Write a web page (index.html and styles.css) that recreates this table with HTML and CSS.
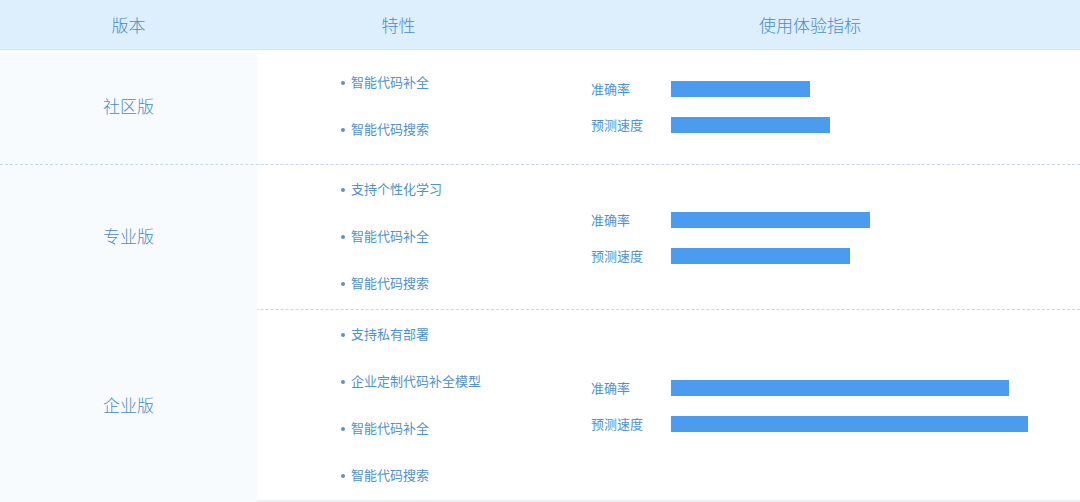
FILE: index.html
```html
<!DOCTYPE html>
<html lang="zh-CN">
<head>
  <meta charset="UTF-8">
  <meta name="viewport" content="width=device-width, initial-scale=1.0">
  <title>版本对比</title>
  <link rel="stylesheet" href="styles.css">
</head>
<body>
  <div class="table">
    <div class="head">
      <div class="cell edition">版本</div>
      <div class="cell">特性</div>
      <div class="cell">使用体验指标</div>
    </div>

    <div class="row row-small">
      <div class="cell edition">社区版</div>
      <ul class="features">
        <li>智能代码补全</li>
        <li>智能代码搜索</li>
      </ul>
      <div class="metrics">
        <div class="metric"><span class="metric-label">准确率</span><span class="bar" style="width: 139px"></span></div>
        <div class="metric"><span class="metric-label">预测速度</span><span class="bar" style="width: 159px"></span></div>
      </div>
    </div>

    <div class="row row-medium">
      <div class="cell edition">专业版</div>
      <ul class="features">
        <li>支持个性化学习</li>
        <li>智能代码补全</li>
        <li>智能代码搜索</li>
      </ul>
      <div class="metrics">
        <div class="metric"><span class="metric-label">准确率</span><span class="bar" style="width: 199px"></span></div>
        <div class="metric"><span class="metric-label">预测速度</span><span class="bar" style="width: 179px"></span></div>
      </div>
    </div>

    <div class="row row-large">
      <div class="cell edition">企业版</div>
      <ul class="features">
        <li>支持私有部署</li>
        <li>企业定制代码补全模型</li>
        <li>智能代码补全</li>
        <li>智能代码搜索</li>
      </ul>
      <div class="metrics">
        <div class="metric"><span class="metric-label">准确率</span><span class="bar" style="width: 338px"></span></div>
        <div class="metric"><span class="metric-label">预测速度</span><span class="bar" style="width: 357px"></span></div>
      </div>
    </div>
  </div>
</body>
</html>
```

FILE: styles.css
```css
/* General Styles */
body {
  margin: 0;
  padding: 0;
  background: #fff;
  font-family: "Noto Sans CJK SC", "Noto Sans", sans-serif;
  color: #4a8cc6;
}

.table {
  width: 1080px;
  height: 502px;
  border-bottom: 2px solid #edf0f4;
  box-sizing: border-box;
}

/* Header */
.head {
  display: grid;
  grid-template-columns: 257px 283px 1fr;
  height: 50px;
  background: #ddeefc;
  border-bottom: 1px solid #d3e6f7;
  box-sizing: border-box;
}

.head .cell {
  display: flex;
  align-items: center;
  justify-content: center;
  padding-bottom: 1px;
  font-size: 17px;
  font-weight: 300;
}

.head .edition {
  background: transparent;
}

/* Rows */
.row {
  display: grid;
  grid-template-columns: 257px 283px 1fr;
  border-bottom: 1px dashed #c3d8e8;
}

.row:last-child {
  border-bottom: none;
}

.row-small {
  height: 114px;
}

.row-medium {
  height: 144px;
}

.row-large {
  height: 192px;
}

.edition {
  display: flex;
  align-items: center;
  justify-content: center;
  padding-bottom: 4px;
  background: #f8fbfe;
  font-size: 17px;
  font-weight: 300;
}

.features {
  list-style: none;
  margin: 0;
  padding: 0 0 4px 84px;
  display: flex;
  flex-direction: column;
  justify-content: center;
}

.features li {
  display: flex;
  align-items: center;
  height: 47px;
  font-size: 13px;
  color: #5092cb;
}

.features li::before {
  content: "";
  width: 4px;
  height: 4px;
  margin: 2px 6px 0 0;
  border-radius: 50%;
  background: #5d93c4;
}

/* Metrics */
.metrics {
  display: flex;
  flex-direction: column;
  justify-content: center;
  gap: 20px;
  padding-left: 51px;
}

.metric {
  display: flex;
  align-items: center;
  height: 16px;
}

.metric-label {
  width: 80px;
  font-size: 13px;
  line-height: 16px;
  color: #5092cb;
}

.bar {
  display: block;
  height: 16px;
  background: #4b9bee;
}
```
